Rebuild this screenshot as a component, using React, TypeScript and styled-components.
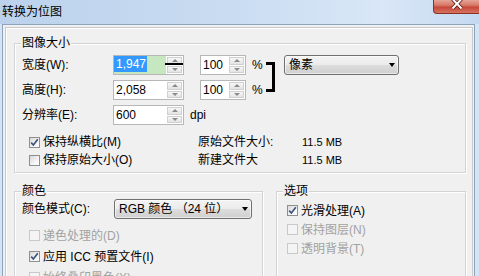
import styled, { createGlobalStyle } from 'styled-components';

const GlobalStyle = createGlobalStyle`
  *, *::before, *::after { box-sizing: border-box; }
  html, body { margin: 0; padding: 0; }
  body {
    background: #f0f0f0;
    font-family: "Liberation Sans", "Noto Sans CJK SC", sans-serif;
  }
`;

const Window = styled.div`
  width: 479px;
  height: 276px;
  overflow: hidden;
  display: flex;
  flex-direction: column;
  background: #d4e4f5;
  font-size: 12px;
  color: #000;
`;

const TitleBar = styled.div`
  flex: none;
  height: 24px;
  display: flex;
  align-items: flex-start;
  background: linear-gradient(to right, #bcd2ec 0%, #c8dbf1 45%, #d9e7f7 80%, #c4d9f0 100%);
`;

const Title = styled.span`
  padding: 4px 0 0 2px;
  line-height: 14px;
  font-family: "Noto Sans CJK SC", sans-serif;
`;

const CloseButton = styled.div`
  margin-left: auto;
  width: 46px;
  height: 14px;
  border: 1px solid #8b3027;
  border-top: none;
  border-right: none;
  border-radius: 0 0 0 4px;
  background: linear-gradient(#e6a496 0%, #d77967 40%, #c8483a 55%, #d5735f 100%);
  display: flex;
  justify-content: center;
  align-items: flex-start;
`;

const Client = styled.div`
  flex: 1;
  margin: 0 4px 0 2px;
  border: 1px solid #8ea3bc;
  border-bottom: none;
  background: #f0f0f0;
  padding: 2px 1px 0 2px;
  display: flex;
  flex-direction: column;
`;

const Panel = styled.div`
  flex: 1;
  border: 1px solid #cacaca;
  border-bottom: none;
  box-shadow: inset 1px 1px 0 #fff;
  padding: 8px 6px 0 8px;
`;

const Group = styled.fieldset<{ $width?: number; $height?: number }>`
  margin: 0;
  min-width: 0;
  border: 1px solid #d3d3d3;
  box-shadow: inset 1px 1px 0 #fff, 1px 1px 0 #fff;
  padding: 0 7px 3px;
  ${(p) => (p.$width ? `width: ${p.$width}px; flex: none;` : '')}
  ${(p) => (p.$height ? `height: ${p.$height}px;` : '')}
`;

const Legend = styled.legend`
  padding: 0 1px;
  margin-left: -1px;
  line-height: 14px;
  background: #f0f0f0;
`;

const SizeGrid = styled.div`
  margin-top: 5px;
  display: grid;
  grid-template-columns: 91px 71px 16px 46px 20px 18px 115px;
  grid-auto-rows: 20px;
  row-gap: 5px;
  align-items: center;
`;

const Label = styled.span`
  line-height: 14px;
  white-space: nowrap;
`;

const RowLabel = styled(Label)`
  grid-column: 1;
`;

const Unit = styled.span<{ $span?: boolean }>`
  padding-left: 6px;
  line-height: 14px;
  ${(p) => (p.$span ? 'grid-column: 3 / 5;' : '')}
`;

const Field = styled.div<{ $width: number; $col: number }>`
  grid-column: ${(p) => p.$col};
  width: ${(p) => p.$width}px;
  height: 20px;
  display: flex;
  border: 1px solid #b7b7b7;
  background: #fff;
`;

const FieldText = styled.div<{ $active?: boolean }>`
  flex: 1;
  padding-left: ${(p) => (p.$active ? 0 : 2)}px;
  line-height: 18px;
  background: ${(p) => (p.$active ? '#c6e7c0' : '#fff')};
`;

const Selected = styled.span`
  display: inline-block;
  height: 16px;
  line-height: 16px;
  padding: 0 1px 0 2px;
  background: #3399ff;
  color: #fff;
  vertical-align: top;
`;

const Spin = styled.div`
  position: relative;
  width: 17px;
  display: flex;
  flex-direction: column;
  gap: 1px;
  padding: 1px;
  background: #fff;
`;

const SpinButton = styled.div`
  flex: 1;
  border: 1px solid #d0d0d0;
  background: linear-gradient(#f7f7f7, #e3e3e3);
  display: flex;
  justify-content: center;
  align-items: center;
`;

const Arrow = styled.span<{ $down?: boolean }>`
  width: 0;
  height: 0;
  border-left: 3px solid transparent;
  border-right: 3px solid transparent;
  ${(p) =>
    p.$down ? 'border-top: 3px solid #8a8a8a;' : 'border-bottom: 3px solid #8a8a8a;'}
`;

const CursorLine = styled.span`
  position: absolute;
  left: -1px;
  right: 0;
  top: 7px;
  height: 2px;
  background: #000;
`;

const Bracket = styled.div`
  grid-row: 1 / 3;
  grid-column: 6;
  align-self: start;
  margin-top: 7px;
  width: 9px;
  height: 30px;
  border: 3px solid #000;
  border-left: none;
`;

const Select = styled.div<{ $width: number }>`
  grid-column: 7;
  grid-row: 1;
  width: ${(p) => p.$width}px;
  height: 20px;
  display: flex;
  align-items: center;
  padding: 0 3px 0 4px;
  border: 1px solid #707070;
  border-radius: 3px;
  background: linear-gradient(#f3f3f3 0%, #ebebeb 48%, #dddddd 52%, #cfcfcf 100%);
  box-shadow: inset 0 0 0 1px rgba(255, 255, 255, 0.6);
  line-height: 14px;
  white-space: nowrap;
`;

const ModeSelect = styled(Select)`
  grid-column: 2;
`;

const SelectArrow = styled.span`
  margin-left: auto;
  width: 0;
  height: 0;
  border-left: 3.5px solid transparent;
  border-right: 3.5px solid transparent;
  border-top: 4px solid #000;
`;

const CheckGrid = styled.div`
  margin-top: 8px;
  display: grid;
  grid-template-columns: 176px 104px auto;
  grid-auto-rows: 18px;
  align-items: center;
`;

const InfoValue = styled.span`
  font-size: 11px;
  line-height: 14px;
`;

const CheckList = styled.div<{ $top: number; $indent: number; $row: number }>`
  margin-top: ${(p) => p.$top}px;
  padding-left: ${(p) => p.$indent}px;
  display: grid;
  grid-auto-rows: ${(p) => p.$row}px;
  align-items: center;
`;

const CheckRow = styled.div<{ $disabled?: boolean; $indent?: number }>`
  display: flex;
  align-items: center;
  gap: 3px;
  padding-left: ${(p) => p.$indent ?? 0}px;
  color: ${(p) => (p.$disabled ? '#a2a2a2' : '#000')};
  line-height: 14px;
  white-space: nowrap;
`;

const Box = styled.span<{ $disabled?: boolean }>`
  flex: none;
  width: 11px;
  height: 11px;
  border: 1px solid ${(p) => (p.$disabled ? '#c9c9c9' : '#8e8f8f')};
  background: ${(p) =>
    p.$disabled ? '#f4f4f4' : 'linear-gradient(135deg, #d8d8d8 0%, #f4f4f4 60%, #fff 100%)'};
  display: flex;
  justify-content: center;
  align-items: center;
`;

const ModeRow = styled.div`
  margin-top: 1px;
  display: grid;
  grid-template-columns: 92px 138px;
  grid-auto-rows: 20px;
  align-items: center;
`;

const BottomRow = styled.div`
  margin-top: 11px;
  display: flex;
  gap: 13px;
`;

const Check = ({
  label,
  checked,
  disabled,
  indent,
}: {
  label: string;
  checked?: boolean;
  disabled?: boolean;
  indent?: number;
}) => (
  <CheckRow $disabled={disabled} $indent={indent}>
    <Box $disabled={disabled}>
      {checked && (
        <svg width="9" height="9" viewBox="0 0 9 9">
          <path d="M1.2 4.6 L3.4 7 L7.8 1.3" fill="none" stroke="#40537a" strokeWidth="1.7" />
        </svg>
      )}
    </Box>
    {label}
  </CheckRow>
);

const SpinInput = ({
  value,
  width,
  col,
  active,
}: {
  value: string;
  width: number;
  col: number;
  active?: boolean;
}) => (
  <Field $width={width} $col={col}>
    <FieldText $active={active}>{active ? <Selected>{value}</Selected> : value}</FieldText>
    <Spin>
      <SpinButton>
        <Arrow />
      </SpinButton>
      <SpinButton>
        <Arrow $down />
      </SpinButton>
      {active && <CursorLine />}
    </Spin>
  </Field>
);

const App = () => {
  return (
    <>
      <GlobalStyle />
      <Window>
        <TitleBar>
          <Title>转换为位图</Title>
          <CloseButton>
            <svg width="14" height="11" viewBox="0 0 14 11">
              <path d="M2.5 -1 L11.5 8.5 M11.5 -1 L2.5 8.5" stroke="#5a1a14" strokeWidth="3.6" />
              <path d="M2.5 -1 L11.5 8.5 M11.5 -1 L2.5 8.5" stroke="#fff" strokeWidth="2" />
            </svg>
          </CloseButton>
        </TitleBar>
        <Client>
          <Panel>
            <Group>
              <Legend>图像大小</Legend>
              <SizeGrid>
                <RowLabel>宽度(W):</RowLabel>
                <SpinInput value="1,947" width={71} col={2} active />
                <SpinInput value="100" width={46} col={4} />
                <Unit>%</Unit>
                <Bracket />
                <Select $width={115}>
                  像素
                  <SelectArrow />
                </Select>

                <RowLabel>高度(H):</RowLabel>
                <SpinInput value="2,058" width={71} col={2} />
                <SpinInput value="100" width={46} col={4} />
                <Unit>%</Unit>

                <RowLabel>分辨率(E):</RowLabel>
                <SpinInput value="600" width={71} col={2} />
                <Unit $span>dpi</Unit>
              </SizeGrid>
              <CheckGrid>
                <Check label="保持纵横比(M)" checked indent={7} />
                <Label>原始文件大小:</Label>
                <InfoValue>11.5 MB</InfoValue>
                <Check label="保持原始大小(O)" indent={7} />
                <Label>新建文件大</Label>
                <InfoValue>11.5 MB</InfoValue>
              </CheckGrid>
            </Group>
            <BottomRow>
              <Group $width={249} $height={120}>
                <Legend>颜色</Legend>
                <ModeRow>
                  <Label>颜色模式(C):</Label>
                  <ModeSelect $width={138}>
                    RGB 颜色 （24 位）
                    <SelectArrow />
                  </ModeSelect>
                </ModeRow>
                <CheckList $top={6} $indent={7} $row={21}>
                  <Check label="递色处理的(D)" disabled />
                  <Check label="应用 ICC 预置文件(I)" checked />
                  <Check label="始终叠印黑色(X)" disabled />
                </CheckList>
              </Group>
              <Group $width={190} $height={120}>
                <Legend>选项</Legend>
                <CheckList $top={3} $indent={3} $row={19}>
                  <Check label="光滑处理(A)" checked />
                  <Check label="保持图层(N)" disabled />
                  <Check label="透明背景(T)" disabled />
                </CheckList>
              </Group>
            </BottomRow>
          </Panel>
        </Client>
      </Window>
    </>
  );
};

export default App;
